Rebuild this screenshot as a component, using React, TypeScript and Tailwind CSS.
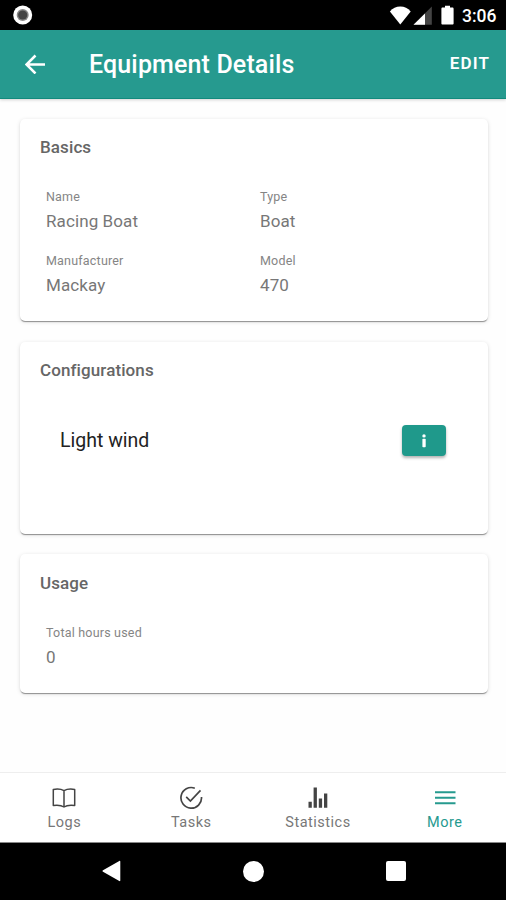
import type { ReactNode } from "react";

function StatusBar() {
  return (
    <div className="flex h-[30px] shrink-0 items-center bg-black pl-[13px] pr-[9px] text-white">
      <svg width="20" height="20" viewBox="0 0 20 20">
        <circle cx="9.7" cy="10" r="9.5" fill="#fff" />
        <circle cx="9.7" cy="10" r="6" fill="#888" />
        <circle cx="9.7" cy="10" r="4.6" fill="#444" />
      </svg>
      <div className="flex-1" />
      {/* Wifi */}
      <svg width="22" height="19" viewBox="0 0 22 19" fill="#fff">
        <path d="M11.3 18.6.9 5.400C3.700 2.200 7.100.6 11.300.6s7.600 1.600 10.400 4.800z" />
      </svg>
      {/* Signal */}
      <svg className="ml-[2px]" width="19" height="19" viewBox="0 0 19 19">
        <path d="M.5 18.800 18.800.6v18.200z" fill="#444" />
        <path d="M.5 18.800 12 7.400v11.400z" fill="#fff" />
      </svg>
      {/* Battery */}
      <svg className="ml-[9px]" width="13" height="20" viewBox="0 0 13 20" fill="#fff">
        <path d="M4 .8h5v1.700h2.400c.7 0 1.200.5 1.200 1.200v14.700c0 .7-.5 1.200-1.200 1.200H1.600c-.7 0-1.200-.5-1.200-1.200V3.700c0-.7.5-1.200 1.200-1.200H4z" />
      </svg>
      <span className="ml-2 w-[35px] pt-px whitespace-nowrap text-[17.5px] leading-[30px] font-medium">3:06</span>
    </div>
  );
}

function Header() {
  return (
    <header className="z-10 flex h-[69px] shrink-0 items-center border-b border-[#128a7d] bg-[#269a8f] pl-[25px] pr-[16px] text-white shadow-[0_1px_3px_rgba(0,0,0,0.18)]">
      <svg width="21" height="20" viewBox="0 0 21 20" fill="none" stroke="#fff" strokeWidth="2.5">
        <path d="M20 10.500H1.800M10.500 1.500l-9 9 9 9" />
      </svg>
      <h1 className="ml-[43px] flex-1 pt-[2px] text-[25px] font-medium tracking-[0.14px]">Equipment Details</h1>
      <button className="text-[17px] font-semibold tracking-[1.1px]">EDIT</button>
    </header>
  );
}

function Card({ title, className, children }: { title: string; className: string; children: ReactNode }) {
  return (
    <section
      className={`mr-[18px] ml-5 rounded-[5px] bg-white px-5 shadow-[0_2px_1px_-1px_rgba(0,0,0,0.28),0_1px_1px_rgba(0,0,0,0.15),0_1px_4px_rgba(0,0,0,0.13)] ${className}`}
    >
      <h2 className="text-[17px] leading-[22px] font-medium tracking-[0.1px] text-[#666]">{title}</h2>
      {children}
    </section>
  );
}

function Field({ label, value }: { label: string; value: string }) {
  return (
    <div className="h-16">
      <div className="text-[12.5px] leading-[18px] tracking-[0.2px] text-[#858585]">{label}</div>
      <div className="mt-1 text-[17px] leading-[22px] tracking-[0.1px] text-[#777]">{value}</div>
    </div>
  );
}

function Tab({ label, active, children }: { label: string; active?: boolean; children: ReactNode }) {
  return (
    <div className={`flex w-[126.8px] shrink-0 flex-col items-center pt-[13px] ${active ? "text-[#269a8f]" : "text-[#444]"}`}>
      {children}
      <span className={`mt-[3px] text-[14.5px] leading-[20px] tracking-[0.5px] ${active ? "text-[#269a8f]" : "text-[#777]"}`}>
        {label}
      </span>
    </div>
  );
}

export default function App() {
  return (
    <div className="flex h-[900px] w-[506px] flex-col overflow-hidden bg-[#fefefe] font-['Roboto',sans-serif]">
      <StatusBar />
      <Header />

      <main className="flex-1 pt-5">
        <Card title="Basics" className="h-[202px] pt-[17px]">
          <div className="mt-[30px] grid grid-cols-[214px_1fr] pl-[6px]">
            <Field label="Name" value="Racing Boat" />
            <Field label="Type" value="Boat" />
            <Field label="Manufacturer" value="Mackay" />
            <Field label="Model" value="470" />
          </div>
        </Card>

        <Card title="Configurations" className="mt-[21px] h-[192px] pt-[17px]">
          <div className="mt-[44px] flex items-center justify-between pl-5 pr-[22px]">
            <span className="text-[19.5px] leading-[30px] text-[#222]">Light wind</span>
            <button className="flex h-[31px] w-[44px] items-center justify-center rounded-[4px] bg-[#1f998b] shadow-[0_2px_3px_rgba(0,0,0,0.3)]">
              <svg width="6" height="14" viewBox="0 0 6 14" fill="#fff">
                <circle cx="3" cy="1.9" r="1.7" />
                <rect x="1.4" y="4.8" width="3.3" height="8.4" rx="0.8" />
              </svg>
            </button>
          </div>
        </Card>

        <Card title="Usage" className="mt-[20px] h-[139px] pt-[18px]">
          <div className="mt-[30px] pl-[6px]">
            <Field label="Total hours used" value="0" />
          </div>
        </Card>
      </main>

      <nav className="flex h-[71px] shrink-0 border-t border-b border-t-[#eee] border-b-[#888] bg-white pl-px">
        <Tab label="Logs">
          <svg width="24" height="24" viewBox="0 0 24 24" fill="none" stroke="currentColor" strokeWidth="1.5" strokeLinejoin="round">
            <path d="M12 4.600C9 2.900 5 2.800 1.300 3.400v16.100c4-.5 8-.3 10.700 1.500 2.700-1.800 6.700-2 10.700-1.500V3.400C19 2.800 15 2.900 12 4.600zV21" />
          </svg>
        </Tab>
        <Tab label="Tasks">
          <svg width="24" height="24" viewBox="0 0 24 24" fill="none" stroke="currentColor" strokeWidth="1.7">
            <path d="M15.800 2.200A10.300 10.300 0 1 0 22.500 11M7.200 10.900l4.200 4.100L21.500 4.300" />
          </svg>
        </Tab>
        <Tab label="Statistics">
          <svg width="24" height="24" viewBox="0 0 24 24" fill="currentColor">
            <path d="M2.500 15.800h3.300v6H2.500zM7.600 1.600h3.300v20.200H7.600zM12.800 12.600h3.300v9.200h-3.300zM18 7.600h3.300v14.200H18z" />
          </svg>
        </Tab>
        <Tab label="More" active>
          <svg width="24" height="24" viewBox="0 0 24 24" stroke="currentColor" strokeWidth="2">
            <path d="M2 6.300h20.500M2 11.700h20.500M2 17.200h20.500" />
          </svg>
        </Tab>
      </nav>

      {/* Android navigation buttons */}
      <div className="flex h-[57px] shrink-0 items-center justify-between bg-black pr-[100px] pb-px pl-[102px]">
        <svg width="19" height="22" viewBox="0 0 19 22" fill="#fff">
          <path d="M18.300 1.500v19c0 .6-.5.8-1 .5L1 11.800c-.6-.4-.6-1.100 0-1.500L17.300 1c.5-.3 1-.1 1 .5z" />
        </svg>
        <div className="size-[21px] rounded-full bg-white" />
        <div className="size-5 rounded-[2px] bg-white" />
      </div>
    </div>
  );
}
